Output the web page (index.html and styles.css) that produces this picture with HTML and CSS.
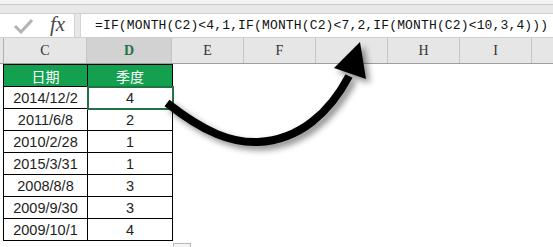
FILE: index.html
```html
<!DOCTYPE html>
<html lang="zh">
<head>
  <meta charset="UTF-8">
  <title>季度公式</title>
  <link rel="stylesheet" href="styles.css">
</head>
<body>

  <div class="ribbon"></div>
  <div class="ribbon-gap"></div>

  <div class="formula-bar">
    <div class="fx-box">
      <svg class="check" width="20" height="16" viewBox="0 0 20 16">
        <path d="M2 8 L8 14 L19 2" fill="none" stroke="#b4b4b4" stroke-width="3"/>
      </svg>
      <span class="fx">fx</span>
    </div>
    <div class="formula">=IF(MONTH(C2)&lt;4,1,IF(MONTH(C2)&lt;7,2,IF(MONTH(C2)&lt;10,3,4)))</div>
  </div>

  <div class="col-heads">
    <div class="corner"></div>
    <div class="col-head c">C</div>
    <div class="col-head d active">D</div>
    <div class="col-head">E</div>
    <div class="col-head">F</div>
    <div class="col-head"></div>
    <div class="col-head">H</div>
    <div class="col-head">I</div>
    <div class="col-head last"></div>
  </div>

  <div class="sheet">
    <table class="data">
      <tr class="head"><td>日期</td><td>季度</td></tr>
      <tr><td>2014/12/2</td><td class="selected">4</td></tr>
      <tr><td>2011/6/8</td><td>2</td></tr>
      <tr><td>2010/2/28</td><td>1</td></tr>
      <tr><td>2015/3/31</td><td>1</td></tr>
      <tr><td>2008/8/8</td><td>3</td></tr>
      <tr><td>2009/9/30</td><td>3</td></tr>
      <tr><td>2009/10/1</td><td>4</td></tr>
    </table>
    <div class="paste-icon"></div>
  </div>

  <!-- big arrow drawn over the sheet -->
  <svg class="arrow" width="553" height="247" viewBox="0 0 553 247">
    <path d="M167 103 C 205 133 232 143 258 142 C 300 140 330 112 349 76" fill="none" stroke="#000" stroke-width="8"/>
    <polygon points="360,42 334,68 366,79" fill="#000"/>
  </svg>

</body>
</html>
```

FILE: styles.css
```css
* {
  margin: 0;
  padding: 0;
  box-sizing: border-box;
}

body {
  width: 553px;
  height: 247px;
  overflow: hidden;
  background: #fff;
  position: relative;
  font-family: "Liberation Sans", Arial, sans-serif;
}

.ribbon {
  height: 5px;
  background: #f3f3f3;
  border-bottom: 1px solid #c9c9c9;
}

.ribbon-gap {
  height: 8px;
  background: #e8e8e8;
}

.formula-bar {
  display: flex;
  height: 25px;
  background: #e8e8e8;
  border-top: 1px solid #cfcfcf;
  border-bottom: 1px solid #cfcfcf;
}

.fx-box {
  width: 75px;
  background: #fff;
  display: flex;
  align-items: center;
  border-right: 1px solid #d4d4d4;
}

.check {
  margin-left: 13px;
}

.fx {
  margin-left: 17px;
  font-family: "Liberation Serif", serif;
  font-style: italic;
  font-size: 21px;
  color: #4a4a4a;
  line-height: 1;
  margin-top: -2px;
}

.formula {
  flex: 1;
  margin-left: 5px;
  background: #fff;
  border-left: 1px solid #d4d4d4;
  padding-left: 14px;
  font-family: "Liberation Mono", monospace;
  font-size: 13px;
  letter-spacing: 0.15px;
  line-height: 23px;
  color: #111;
  white-space: nowrap;
}

.col-heads {
  display: grid;
  grid-template-columns: 3px 83px 85px 72px 72px 72px 72px 72px 1fr;
  height: 26px;
  background: #e6e6e6;
  border-bottom: 1px solid #9e9e9e;
}

.col-head {
  border-left: 1px solid #c4c4c4;
  text-align: center;
  font-family: "Liberation Serif", serif;
  font-size: 14px;
  line-height: 25px;
  color: #333;
}

.col-head.c {
  border-left: 1px solid #b0b0b0;
}

.col-head.active {
  background: #d2d2d2;
  color: #217346;
  font-weight: bold;
}

.sheet {
  position: relative;
  padding-left: 3px;
}

.data {
  border-collapse: collapse;
}

.data td {
  border: 1px solid #000;
  height: 22px;
  padding: 0;
  text-align: center;
  font-size: 14.5px;
  color: #1e1e1e;
  line-height: 20px;
}

.data td:first-child {
  width: 84px;
}

.data td:last-child {
  width: 85px;
}

.data .head td {
  background: #13a14f;
  color: #fff;
  font-size: 14px;
  font-family: "Noto Sans CJK SC", sans-serif;
}

.data td.selected {
  outline: 2px solid #217346;
  outline-offset: -1px;
}

.paste-icon {
  position: absolute;
  left: 173px;
  top: 179px;
  width: 18px;
  height: 10px;
  border: 1px solid #b8b8b8;
  background: #f4f4f4;
}

.arrow {
  position: absolute;
  left: 0;
  top: 0;
  filter: drop-shadow(4px 4px 3px rgba(0, 0, 0, 0.45));
}
```
